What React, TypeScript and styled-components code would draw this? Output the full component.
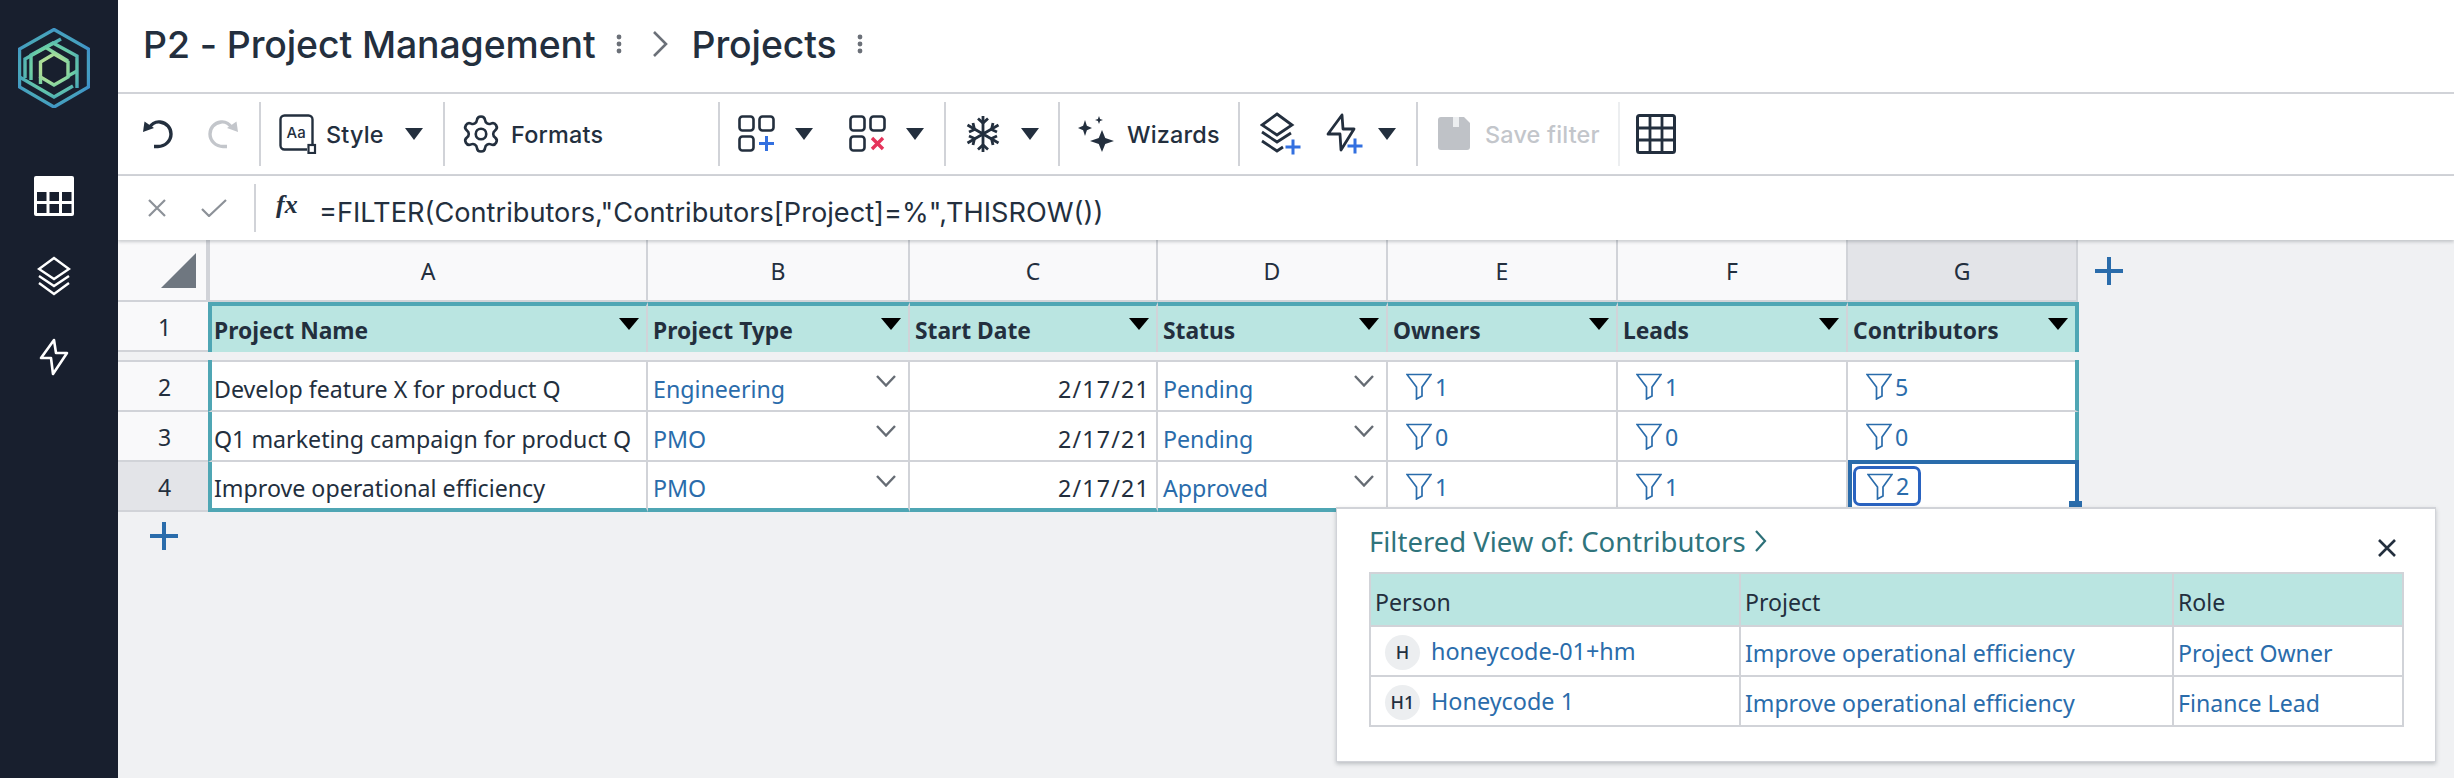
import React from "react";
import styled, { createGlobalStyle } from "styled-components";
import { Settings } from "lucide-react";

const Global = createGlobalStyle`
  html, body { margin: 0; padding: 0; height: 100%; background: #f0f1f3; }
  #root { height: 100%; }
  * { box-sizing: border-box; }
`;

const INK = "#232f3e";
const BLUE = "#2a6cab";
const LINE = "#d1d3d8";
const TEAL = "#4fa6b4";
const MINT = "#bae5e1";
const ADD = "#3370e0";
const CELL = `"Noto Sans", "Open Sans", sans-serif`;
const UI = `Inter, "Liberation Sans", sans-serif`;

const Page = styled.div`
  display: flex;
  width: 2454px;
  height: 778px;
  overflow: hidden;
  background: #f0f1f3;
`;
const Sidebar = styled.nav`
  flex: 0 0 118px;
  display: flex;
  flex-direction: column;
  align-items: center;
  background: #181f2e;
  padding: 28px 10px 0 0;
`;
const LogoMark = styled.svg`
  display: block;
  width: 72px;
  height: 80px;
  margin-bottom: 68px;
`;
const NavIcon = styled.svg<{ $gap: number }>`
  display: block;
  margin-bottom: ${(p) => p.$gap}px;
`;
const Main = styled.main`
  position: relative;
  flex: 1;
  min-width: 0;
`;
const TitleBar = styled.header`
  height: 94px;
  display: flex;
  align-items: center;
  padding: 0 0 4px 25px;
  background: #fff;
  border-bottom: 2px solid ${LINE};
  font: 500 37.4px ${UI};
  color: ${INK};
`;
const Crumb = styled.span`
  letter-spacing: -0.1px;
`;
const Kebab = styled.svg<{ $after: number }>`
  margin: 0 ${(p) => p.$after}px 0 20px;
  display: block;
`;
const ToolBar = styled.div`
  height: 82px;
  display: flex;
  align-items: center;
  background: #fff;
  border-bottom: 2px solid ${LINE};
`;
const ToolGroup = styled.div<{ $w: number; $pad: number; $faint?: boolean; $none?: boolean }>`
  flex: 0 0 ${(p) => p.$w}px;
  height: 64px;
  display: flex;
  align-items: center;
  padding-left: ${(p) => p.$pad}px;
  border-right: ${(p) => (p.$none ? "none" : `2px solid ${p.$faint ? "#eceef0" : LINE}`)};
`;
const ToolLabel = styled.span<{ $off?: boolean; $l: number; $r?: number }>`
  font: 500 23.4px ${UI};
  color: ${(p) => (p.$off ? "#c3c6cb" : INK)};
  margin: 0 ${(p) => p.$r ?? 0}px 0 ${(p) => p.$l}px;
  white-space: nowrap;
  letter-spacing: 0.2px;
`;
const Caret = styled.span<{ $l: number; $r?: number; $c?: string; $w?: number; $h?: number }>`
  display: block;
  flex: none;
  width: 0;
  height: 0;
  margin: 0 ${(p) => p.$r ?? 0}px 0 ${(p) => p.$l}px;
  border-left: ${(p) => (p.$w ?? 19) / 2}px solid transparent;
  border-right: ${(p) => (p.$w ?? 19) / 2}px solid transparent;
  border-top: ${(p) => p.$h ?? 12}px solid ${(p) => p.$c ?? INK};
`;
const ToolIcon = styled.svg<{ $l?: number }>`
  display: block;
  flex: none;
  margin-left: ${(p) => p.$l ?? 0}px;
`;
const ToolGap = styled.span<{ $w: number }>`
  flex: 0 0 ${(p) => p.$w}px;
`;
const FormulaBar = styled.div`
  height: 64px;
  display: flex;
  align-items: center;
  background: #fff;
  box-shadow: 0 2px 3px rgba(40, 50, 60, 0.22);
  position: relative;
  z-index: 2;
`;
const FormulaTools = styled.div`
  flex: 0 0 138px;
  height: 48px;
  display: flex;
  align-items: center;
  gap: 34px;
  padding-left: 29px;
  border-right: 2px solid ${LINE};
`;
const Fx = styled.i`
  flex: 0 0 22px;
  font: italic 700 26px "Liberation Serif", serif;
  color: ${INK};
  margin: -7px 21px 0 20px;
`;
const Formula = styled.span`
  font: 400 27.2px ${UI};
  color: ${INK};
  white-space: nowrap;
  padding-top: 8px;
`;
const Sheet = styled.div`
  display: grid;
  grid-template-columns: 92px 438px 262px 248px 230px 230px 230px 230px 60px;
  grid-template-rows: 62px 50px 10px 50px 50px 50px;
  width: max-content;
`;
const ColHead = styled.div<{ $sel?: boolean }>`
  display: flex;
  align-items: center;
  justify-content: center;
  padding-top: 2px;
  background: ${(p) => (p.$sel ? "#e3e4e8" : "#f9f9fa")};
  border-right: 2px solid ${LINE};
  border-bottom: 2px solid ${LINE};
  font: 400 23px ${CELL};
  color: ${INK};
`;
const Corner = styled(ColHead)`
  justify-content: flex-end;
  padding: 0 10px 0 0;
  border-right-width: 4px;
`;
const AddCol = styled.div`
  display: flex;
  align-items: center;
  padding-left: 17px;
`;
const RowNum = styled.div<{ $sel?: boolean }>`
  display: flex;
  align-items: center;
  justify-content: flex-start;
  padding: 2px 0 0 40px;
  background: ${(p) => (p.$sel ? "#e3e4e8" : "#f9f9fa")};
  border-bottom: 2px solid ${LINE};
  border-right: 2px solid ${LINE};
  font: 400 23px ${CELL};
  color: ${INK};
`;
const Gap = styled.div`
  grid-column: 1 / 9;
  background: #f0f1f3;
  border-bottom: 2px solid ${LINE};
`;
const Spacer = styled.div``;
const Cell = styled.div<{
  $left?: boolean;
  $right?: boolean;
  $bottom?: boolean;
  $lift?: boolean;
}>`
  position: relative;
  display: flex;
  align-items: center;
  min-width: 0;
  padding: ${(p) => (p.$lift ? 8 : 6)}px 0 0 ${(p) => (p.$left ? 2 : 5)}px;
  margin-left: ${(p) => (p.$left ? -2 : 0)}px;
  margin-right: ${(p) => (p.$right ? -1 : 0)}px;
  margin-top: ${(p) => (p.$lift ? -2 : 0)}px;
  background: ${(p) => (p.$lift ? `linear-gradient(${LINE} 2px, #fff 2px)` : "#fff")};
  border-right: ${(p) => (p.$right ? `4px solid ${TEAL}` : `2px solid ${LINE}`)};
  border-left: ${(p) => (p.$left ? `4px solid ${TEAL}` : "none")};
  border-bottom: ${(p) => (p.$bottom ? `4px solid ${TEAL}` : `2px solid ${LINE}`)};
  font: 400 23.2px ${CELL};
  color: ${INK};
  white-space: nowrap;
`;
const HeadCell = styled(Cell)`
  background: ${MINT};
  border-top: 4px solid ${TEAL};
  border-bottom: none;
  font-size: 22.8px;
  font-weight: 700;
  padding-top: 3px;
`;
const LinkCell = styled(Cell)`
  color: ${BLUE};
`;
const DateCell = styled(Cell)`
  justify-content: flex-end;
  padding-right: 6px;
  letter-spacing: 1.2px;
`;
const HeadCaret = styled(Caret)`
  position: absolute;
  right: 7px;
  top: 12px;
`;
const Chevron = styled.svg`
  position: absolute;
  right: 12px;
  top: 13px;
`;
const FilterCell = styled(Cell)`
  color: ${BLUE};
  padding: ${(p) => (p.$lift ? 13 : 11)}px 0 0 18px;
  gap: 3px;
  align-items: flex-start;
  line-height: 28px;
`;
const SelectedCell = styled(FilterCell)`
  border: 4px solid ${BLUE};
  border-bottom: 2px solid ${BLUE};
  margin: -2px -1px 0 0;
  padding: 2px 0 0 1px;
`;
const Chip = styled.div`
  display: flex;
  align-items: flex-start;
  gap: 3px;
  height: 40px;
  padding: 4px 9px 0 11px;
  border: 3px solid #2a63c0;
  border-radius: 7px;
  line-height: 26px;
`;
const Handle = styled.span`
  position: absolute;
  right: -7px;
  bottom: 2px;
  width: 13px;
  height: 7px;
  background: ${BLUE};
`;
const AddRow = styled.div`
  padding: 10px 0 0 32px;
`;
const Popup = styled.section`
  position: absolute;
  left: 1218px;
  top: 507px;
  width: 1100px;
  height: 255px;
  padding: 16px 32px 0;
  background: #fff;
  border: 2px solid ${LINE};
  border-width: 2px 1px 1px 1px;
  box-shadow: 0 2px 4px rgba(40, 50, 60, 0.25);
  z-index: 5;
`;
const PopTitle = styled.div`
  display: flex;
  align-items: center;
  gap: 8px;
  height: 32px;
  font: 400 27.5px ${CELL};
  color: #2f747c;
`;
const CloseBtn = styled.svg`
  position: absolute;
  right: 38px;
  top: 29px;
`;
const PopTable = styled.div`
  display: grid;
  grid-template-columns: 370px 433px 230px;
  grid-template-rows: 53px 50px 50px;
  margin-top: 15px;
  border: solid ${LINE};
  border-width: 2px 0 0 2px;
  width: 1035px;
`;
const PopCell = styled.div<{ $head?: boolean; $link?: boolean }>`
  display: flex;
  align-items: center;
  min-width: 0;
  padding: 4px 0 0 4px;
  background: ${(p) => (p.$head ? MINT : "#fff")};
  border-right: 2px solid ${LINE};
  border-bottom: 2px solid ${LINE};
  font: 400 23.1px ${CELL};
  color: ${(p) => (p.$link ? BLUE : INK)};
  white-space: nowrap;
`;
const PersonCell = styled(PopCell)`
  padding: 0 0 0 14px;
  gap: 11px;
  font-size: 23.4px;
`;
const Avatar = styled.span`
  flex: 0 0 35px;
  height: 35px;
  margin-top: 2px;
  border-radius: 50%;
  background: #eceef0;
  display: flex;
  align-items: center;
  justify-content: center;
  font: 500 18px ${CELL};
  color: ${INK};
`;
const Funnel = styled.svg`
  flex: none;
  display: block;
`;
const Glyph = styled.svg`
  display: block;
  flex: none;
`;

const Star = ({ cx, cy, r, ry }: { cx: number; cy: number; r: number; ry?: number }) => {
  const h = ry ?? r;
  const k = 0.27;
  return (
    <path
      d={`M${cx} ${cy - h}L${cx + r * k} ${cy - h * k}L${cx + r} ${cy}L${cx + r * k} ${cy + h * k}L${cx} ${cy + h}L${cx - r * k} ${cy + h * k}L${cx - r} ${cy}L${cx - r * k} ${cy - h * k}Z`}
      fill={INK}
    />
  );
};

const Logo = () => (
  <LogoMark viewBox="0 0 72 80">
    <defs>
      <radialGradient id="lg" gradientUnits="userSpaceOnUse" cx="34" cy="40" r="42">
        <stop offset="0" stopColor="#dbe78e" />
        <stop offset="0.3" stopColor="#a8dc98" />
        <stop offset="0.5" stopColor="#6ccfa6" />
        <stop offset="0.75" stopColor="#4aa9b8" />
        <stop offset="1" stopColor="#3d8fcb" />
      </radialGradient>
    </defs>
    <g fill="none" stroke="url(#lg)" strokeWidth="3.4">
      <path d="M36 1.5 L70.5 21 V59 L36 79 L1.5 59 V21 Z" />
      <path d="M43 11 L7 31 V50" />
      <path d="M1.5 49 L36 69 L55 58" />
      <path d="M13 52 V27 L35 15 L59 28 V60" />
      <path d="M27 19 L50 33" />
      <path d="M36 26 L50 34 V49 L36 57 L22.5 49 V34 Z" />
      <path d="M22.5 49 V56" />
      <path d="M50 48 L59 43" />
    </g>
  </LogoMark>
);

const SideTable = () => (
  <NavIcon $gap={40} width="40" height="40" viewBox="0 0 40 40">
    <rect width="40" height="40" rx="2" fill="#fff" />
    <g fill="#181f2e">
      <rect x="3" y="16" width="9.5" height="9" />
      <rect x="15.5" y="16" width="9.5" height="9" />
      <rect x="28" y="16" width="9.5" height="9" />
      <rect x="3" y="28" width="9.5" height="9" />
      <rect x="15.5" y="28" width="9.5" height="9" />
      <rect x="28" y="28" width="9.5" height="9" />
    </g>
  </NavIcon>
);
const SideLayers = () => (
  <NavIcon $gap={42} width="34" height="40" viewBox="0 0 34 40" fill="none" stroke="#fff" strokeWidth="2.4">
    <path d="M17 2 L32 13 L17 23 L2 13 Z" />
    <path d="M2 20 L17 30 L32 20" />
    <path d="M2 27 L17 38 L32 27" />
  </NavIcon>
);
const SideBolt = () => (
  <NavIcon $gap={0} width="30" height="38" viewBox="0 0 30 38" fill="none" stroke="#fff" strokeWidth="2.6" strokeLinejoin="round">
    <path d="M15 2 L2 20 H12 L14 36 L28 15 H17 Z" />
  </NavIcon>
);

const Undo = ({ c, flip }: { c: string; flip?: boolean }) => (
  <ToolIcon
    width="32"
    height="30"
    viewBox="0 0 32 30"
    fill="none"
    style={flip ? { transform: "scaleX(-1)" } : undefined}
  >
    <path d="M7 9 C10 4.5 14 2.5 18 3 C25 4 29 9 29 15 C29 22 23 27.5 16 27.5 H12" stroke={c} strokeWidth="3.4" />
    <path d="M1 13 L2.5 2.5 L12 9 Z" fill={c} />
  </ToolIcon>
);
const StyleIcon = () => (
  <ToolIcon $l={0} width="38" height="40" viewBox="0 0 38 40" fill="none">
    <rect x="1.5" y="1.5" width="32" height="34" rx="4" stroke={INK} strokeWidth="2.4" />
    <text x="7.5" y="24" fontFamily="Inter, sans-serif" fontSize="15" fontWeight="500" fill={INK}>Aa</text>
    <rect x="28" y="30" width="9" height="10" fill="#fff" />
    <rect x="29.5" y="31" width="6.5" height="8" fill="none" stroke={INK} strokeWidth="2.2" />
  </ToolIcon>
);
const Squares = ({ children }: { children: React.ReactNode }) => (
  <ToolIcon width="38" height="38" viewBox="0 0 38 38" fill="none">
    <g stroke={INK} strokeWidth="2.6">
      <rect x="1.5" y="1.5" width="14" height="14" rx="3" />
      <rect x="21.5" y="1.5" width="14" height="14" rx="3" />
      <rect x="1.5" y="21.5" width="14" height="14" rx="3" />
    </g>
    {children}
  </ToolIcon>
);
const Plus = ({ x, y, s }: { x: number; y: number; s: number }) => (
  <path d={`M${x - s} ${y}H${x + s}M${x} ${y - s}V${y + s}`} stroke={ADD} strokeWidth="3" fill="none" />
);
const Snow = () => (
  <ToolIcon width="34" height="38" viewBox="0 0 34 38" fill="none" stroke={INK} strokeWidth="2.8">
    <path d="M17 1V37M1.5 10L32.5 28M32.5 10L1.5 28" />
    <path d="M12 3.5L17 8L22 3.5M12 34.5L17 30L22 34.5" />
    <path d="M3 17L8.5 14.5L7 8M31 17L25.5 14.5L27 8M3 21L8.5 23.5L7 30M31 21L25.5 23.5L27 30" />
  </ToolIcon>
);
const Wizard = () => (
  <ToolIcon width="38" height="36" viewBox="0 0 38 36">
    <Star cx={7} cy={12} r={7} ry={8} />
    <Star cx={21} cy={4} r={4} ry={4} />
    <Star cx={24} cy={25} r={12} ry={11} />
  </ToolIcon>
);
const LayersAdd = () => (
  <ToolIcon width="42" height="44" viewBox="0 0 42 44" fill="none">
    <g stroke={INK} strokeWidth="2.8">
      <path d="M17 2 L32 13 L17 23 L2 13 Z" />
      <path d="M2 20 L17 30 L31 21" />
      <path d="M2 29 L17 39 L23 35" />
    </g>
    <Plus x={33} y={35} s={7.5} />
  </ToolIcon>
);
const BoltAdd = () => (
  <ToolIcon $l={24} width="40" height="42" viewBox="0 0 40 42" fill="none">
    <path d="M16 2 L2 21 H14 L15 37 L28 16 H17 Z" stroke={INK} strokeWidth="2.8" strokeLinejoin="round" />
    <Plus x={29} y={33} s={7.5} />
  </ToolIcon>
);
const Save = () => (
  <ToolIcon width="32" height="34" viewBox="0 0 32 34">
    <path d="M3 0H26L32 6V30a3 3 0 0 1-3 3H3a3 3 0 0 1-3-3V3a3 3 0 0 1 3-3Z" fill="#bfc2c7" />
    <rect x="15" y="0" width="6" height="10" fill="#eceef0" />
  </ToolIcon>
);
const GridIcon = () => (
  <ToolIcon width="40" height="40" viewBox="0 0 40 40" fill="none" stroke={INK} strokeWidth="2.8">
    <rect x="1.5" y="1.5" width="37" height="37" rx="2" strokeWidth="3" />
    <path d="M14 2V38M26 2V38M2 14H38M2 26H38" />
  </ToolIcon>
);
const FilterCount = ({ n }: { n: number }) => (
  <>
    <Funnel width="26" height="27" viewBox="0 0 26 27" fill="none" stroke={BLUE} strokeWidth="1.7">
      <path d="M1 1.5H25L16 14V23L10.5 26V14Z" />
    </Funnel>
    <span>{n}</span>
  </>
);
const DownChevron = () => (
  <Chevron width="20" height="12" viewBox="0 0 20 12" fill="none" stroke="#666c74" strokeWidth="2.4">
    <path d="M1 1L10 10.5L19 1" />
  </Chevron>
);
const BigPlus = () => (
  <Glyph width="28" height="28" viewBox="0 0 28 28">
    <path d="M0 14H28M14 0V28" stroke={BLUE} strokeWidth="4" />
  </Glyph>
);
const Dots = ({ after }: { after: number }) => (
  <Kebab $after={after} width="6" height="20" viewBox="0 0 6 20" fill="#6b7078">
    <circle cx="3" cy="3" r="2.4" />
    <circle cx="3" cy="10" r="2.4" />
    <circle cx="3" cy="17" r="2.4" />
  </Kebab>
);

const rows = [
  { name: "Develop feature X for product Q", type: "Engineering", status: "Pending", o: 1, l: 1, c: 5, num: 2 },
  { name: "Q1 marketing campaign for product Q", type: "PMO", status: "Pending", o: 0, l: 0, c: 0, num: 3 },
  { name: "Improve operational efficiency", type: "PMO", status: "Approved", o: 1, l: 1, c: 2, num: 4 },
];
const heads = ["Project Name", "Project Type", "Start Date", "Status", "Owners", "Leads", "Contributors"];

export default function App() {
  return (
    <Page>
      <Global />
      <Sidebar>
        <Logo />
        <SideTable />
        <SideLayers />
        <SideBolt />
      </Sidebar>
      <Main>
        <TitleBar>
          <Crumb>P2 - Project Management</Crumb>
          <Dots after={30} />
          <Glyph width="16" height="26" viewBox="0 0 16 26" fill="none" stroke="#6b7078" strokeWidth="2.6">
            <path d="M2 1L14 13L2 25" />
          </Glyph>
          <ToolGap $w={24} />
          <Crumb>Projects</Crumb>
          <Dots after={0} />
        </TitleBar>
        <ToolBar>
          <ToolGroup $w={143} $pad={24}>
            <Undo c={INK} />
            <ToolGap $w={33} />
            <Undo c="#c3c6cb" flip />
          </ToolGroup>
          <ToolGroup $w={184} $pad={18}>
            <StyleIcon />
            <ToolLabel $l={9}>Style</ToolLabel>
            <Caret $l={21} />
          </ToolGroup>
          <ToolGroup $w={275} $pad={15}>
            <Settings size={42} color={INK} strokeWidth={1.5} />
            <ToolLabel $l={9}>Formats</ToolLabel>
          </ToolGroup>
          <ToolGroup $w={226} $pad={18}>
            <Squares><Plus x={28.5} y={28.5} s={7.5} /></Squares>
            <Caret $l={19} />
            <ToolGap $w={36} />
            <Squares><path d="M23 23L34 34M34 23L23 34" stroke="#e5345b" strokeWidth="3.4" /></Squares>
            <Caret $l={19} />
          </ToolGroup>
          <ToolGroup $w={114} $pad={20}>
            <Snow />
            <Caret $l={21} />
          </ToolGroup>
          <ToolGroup $w={180} $pad={18}>
            <Wizard />
            <ToolLabel $l={11}>Wizards</ToolLabel>
          </ToolGroup>
          <ToolGroup $w={178} $pad={20}>
            <LayersAdd />
            <BoltAdd />
            <Caret $l={12} />
          </ToolGroup>
          <ToolGroup $w={202} $pad={20} $faint>
            <Save />
            <ToolLabel $off $l={15}>Save filter</ToolLabel>
          </ToolGroup>
          <ToolGroup $w={100} $pad={16} $none>
            <GridIcon />
          </ToolGroup>
        </ToolBar>
        <FormulaBar>
          <FormulaTools>
            <Glyph width="20" height="18" viewBox="0 0 20 18" fill="none" stroke="#8c9198" strokeWidth="2.2">
              <path d="M2 1L18 17M18 1L2 17" />
            </Glyph>
            <Glyph width="26" height="18" viewBox="0 0 26 18" fill="none" stroke="#8c9198" strokeWidth="2.2">
              <path d="M1 10L8 17L25 1" />
            </Glyph>
          </FormulaTools>
          <Fx>fx</Fx>
          <Formula>=FILTER(Contributors,"Contributors[Project]=%",THISROW())</Formula>
        </FormulaBar>
        <Sheet>
          <Corner>
            <Glyph width="35" height="35" viewBox="0 0 35 35">
              <path d="M35 0V35H0Z" fill="#6f7780" />
            </Glyph>
          </Corner>
          {["A", "B", "C", "D", "E", "F"].map((l) => (
            <ColHead key={l}>{l}</ColHead>
          ))}
          <ColHead $sel>G</ColHead>
          <AddCol><BigPlus /></AddCol>

          <RowNum>1</RowNum>
          {heads.map((h, i) => (
            <HeadCell key={h} $left={i === 0} $right={i === 6}>
              {h}
              <HeadCaret $l={0} $c="#000" $w={20} $h={12} />
            </HeadCell>
          ))}
          <Spacer />
          <Gap />
          <Spacer />
          {rows.map((r, ri) => {
            const last = ri === 2;
            const first = ri === 0;
            return (
              <React.Fragment key={r.num}>
                <RowNum $sel={last}>{r.num}</RowNum>
                <Cell $left $lift={first} $bottom={last}>{r.name}</Cell>
                <LinkCell $bottom={last}>{r.type}<DownChevron /></LinkCell>
                <DateCell $bottom={last}>2/17/21</DateCell>
                <LinkCell $bottom={last}>{r.status}<DownChevron /></LinkCell>
                <FilterCell $bottom={last}><FilterCount n={r.o} /></FilterCell>
                <FilterCell $bottom={last}><FilterCount n={r.l} /></FilterCell>
                {last ? (
                  <SelectedCell>
                    <Chip><FilterCount n={r.c} /></Chip>
                    <Handle />
                  </SelectedCell>
                ) : (
                  <FilterCell $right $lift={first}><FilterCount n={r.c} /></FilterCell>
                )}
                <Spacer />
              </React.Fragment>
            );
          })}
        </Sheet>
        <AddRow><BigPlus /></AddRow>
        <Popup>
          <PopTitle>
            Filtered View of: Contributors
            <Glyph width="13" height="22" viewBox="0 0 13 22" fill="none" stroke="#2d7078" strokeWidth="2.2">
              <path d="M2 1L11 11L2 21" />
            </Glyph>
          </PopTitle>
          <CloseBtn width="20" height="20" viewBox="0 0 20 20" fill="none" stroke={INK} strokeWidth="2.6">
            <path d="M2 2L18 18M18 2L2 18" />
          </CloseBtn>
          <PopTable>
            <PopCell $head>Person</PopCell>
            <PopCell $head>Project</PopCell>
            <PopCell $head>Role</PopCell>
            <PersonCell $link><Avatar>H</Avatar>honeycode-01+hm</PersonCell>
            <PopCell $link>Improve operational efficiency</PopCell>
            <PopCell $link>Project Owner</PopCell>
            <PersonCell $link><Avatar>H1</Avatar>Honeycode 1</PersonCell>
            <PopCell $link>Improve operational efficiency</PopCell>
            <PopCell $link>Finance Lead</PopCell>
          </PopTable>
        </Popup>
      </Main>
    </Page>
  );
}
